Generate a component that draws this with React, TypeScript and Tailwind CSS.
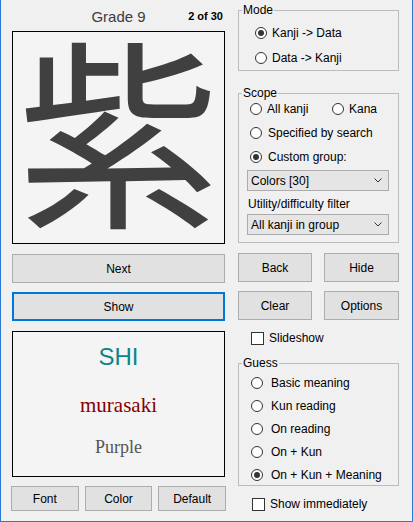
import React from "react";

function Radio({ label, checked, gap = "gap-[6px]" }: { label: string; checked?: boolean; gap?: string }) {
  return (
    <div className={"flex items-center h-[20px] " + gap}>
      <span className="w-[12px] h-[12px] rounded-full border border-[#333333] bg-white flex items-center justify-center shrink-0">
        {checked && <span className="w-[6px] h-[6px] rounded-full bg-[#333333]" />}
      </span>
      <span className="leading-[14px] whitespace-nowrap">{label}</span>
    </div>
  );
}

function Check({ label }: { label: string }) {
  return (
    <div className="flex items-center h-[20px] gap-[5px]">
      <span className="w-[13px] h-[13px] border border-[#333333] bg-white shrink-0" />
      <span className="leading-[14px] whitespace-nowrap">{label}</span>
    </div>
  );
}

function Btn({ children, className }: { children: React.ReactNode; className?: string }) {
  return (
    <div
      className={
        "flex items-center justify-center bg-[#e1e1e1] border border-[#adadad] text-[12px] text-black leading-none " +
        (className ?? "")
      }
    >
      {children}
    </div>
  );
}

function Combo({ value }: { value: string }) {
  return (
    <div className="ml-[8px] w-[142px] h-[21px] bg-[#e5e5e5] border border-[#acacac] flex items-center justify-between pl-[3px] pr-[6px]">
      <span className="leading-[14px]">{value}</span>
      <svg width="8" height="5" viewBox="0 0 8 5">
        <polyline points="0.5,0.5 4,4 7.5,0.5" fill="none" stroke="#333333" strokeWidth="1" />
      </svg>
    </div>
  );
}

function Legend({ children }: { children: React.ReactNode }) {
  return <legend className="ml-[3px] px-[1px] leading-[14px] text-[12px]">{children}</legend>;
}

export default function App() {
  return (
    <div className="w-[413px] h-[522px] bg-[#f0f0f0] border-x border-b border-[#2b79d0] flex font-['Liberation_Sans',Arial,sans-serif] text-[12px] text-black overflow-hidden">
      {/* Left column */}
      <div className="ml-[11px] w-[213px] flex flex-col shrink-0">
        <div className="h-[31px] grid grid-cols-[1fr_auto_1fr] items-center pt-[2px]">
          <div />
          <div className="text-[15px] text-[#3c3c3c] leading-none">Grade 9</div>
          <div className="flex justify-end pr-[2px] text-[11px] font-bold leading-none">2 of 30</div>
        </div>
        <div className="h-[213px] border border-black bg-[#f4f4f4] flex items-center justify-center overflow-hidden">
          <span className="font-['Noto_Sans_CJK_JP',sans-serif] text-[202px] leading-[160px] h-[160px] text-[#404040] mb-[26px]">
            紫
          </span>
        </div>
        <Btn className="mt-[10px] h-[29px]">Next</Btn>
        <Btn className="mt-[9px] h-[29px] !border-2 !border-[#0078d7]">Show</Btn>
        <div className="mt-[10px] h-[146px] border border-black bg-[#f4f4f4] flex flex-col items-center pt-[10px]">
          <div className="h-[30px] leading-[30px] text-[24px] text-[#0e8585] font-['Liberation_Sans',Arial,sans-serif]">SHI</div>
          <div className="mt-[18px] h-[30px] leading-[30px] text-[21px] text-[#860000] font-['Liberation_Serif','Times_New_Roman',serif]">
            murasaki
          </div>
          <div className="mt-[14px] h-[26px] leading-[26px] text-[18px] text-[#555555] font-['Liberation_Serif','Times_New_Roman',serif]">
            Purple
          </div>
        </div>
        <div className="mt-[9px] h-[25px] -mx-[1px] flex gap-[6px]">
          <Btn className="flex-1">Font</Btn>
          <Btn className="flex-1">Color</Btn>
          <Btn className="flex-1">Default</Btn>
        </div>
      </div>

      {/* Right column */}
      <div className="ml-[13px] w-[161px] flex flex-col shrink-0">
        <fieldset className="mt-[3px] border border-[#bcbcbc]">
          <Legend>Mode</Legend>
          <div className="pl-[16px] pt-[6px] pb-[2px] flex flex-col gap-[5px]">
            <Radio label="Kanji -> Data" checked gap="gap-[5px]" />
            <Radio label="Data -> Kanji" gap="gap-[5px]" />
          </div>
        </fieldset>

        <fieldset className="mt-[15px] border border-[#bcbcbc]">
          <Legend>Scope</Legend>
          <div className="pl-[11px] flex items-center h-[18px]">
            <div className="w-[82px]">
              <Radio label="All kanji" gap="gap-[5px]" />
            </div>
            <Radio label="Kana" gap="gap-[5px]" />
          </div>
          <div className="pl-[11px] mt-[5px]">
            <Radio label="Specified by search" />
          </div>
          <div className="pl-[11px] mt-[4px]">
            <Radio label="Custom group:" checked />
          </div>
          <div className="mt-[3px]">
            <Combo value="Colors [30]" />
          </div>
          <div className="mt-[6px] ml-[9px] h-[14px] leading-[14px]">Utility/difficulty filter</div>
          <div className="mt-[3px] pb-[7px]">
            <Combo value="All kanji in group" />
          </div>
        </fieldset>

        <div className="mt-[10px] h-[29px] flex justify-between">
          <Btn className="w-[74px]">Back</Btn>
          <Btn className="w-[75px]">Hide</Btn>
        </div>
        <div className="mt-[9px] h-[29px] flex justify-between">
          <Btn className="w-[74px]">Clear</Btn>
          <Btn className="w-[75px]">Options</Btn>
        </div>
        <div className="mt-[8px] ml-[13px]">
          <Check label="Slideshow" />
        </div>

        <fieldset className="mt-[8px] border border-[#bcbcbc]">
          <Legend>Guess</Legend>
          <div className="pl-[12px] pt-[3px] flex flex-col gap-[3px]">
            <Radio label="Basic meaning" gap="gap-[8px]" />
            <Radio label="Kun reading" gap="gap-[8px]" />
            <Radio label="On reading" gap="gap-[8px]" />
            <Radio label="On + Kun" gap="gap-[8px]" />
            <Radio label="On + Kun + Meaning" checked gap="gap-[8px]" />
          </div>
        </fieldset>

        <div className="mt-[8px] ml-[14px]">
          <Check label="Show immediately" />
        </div>
      </div>
    </div>
  );
}
